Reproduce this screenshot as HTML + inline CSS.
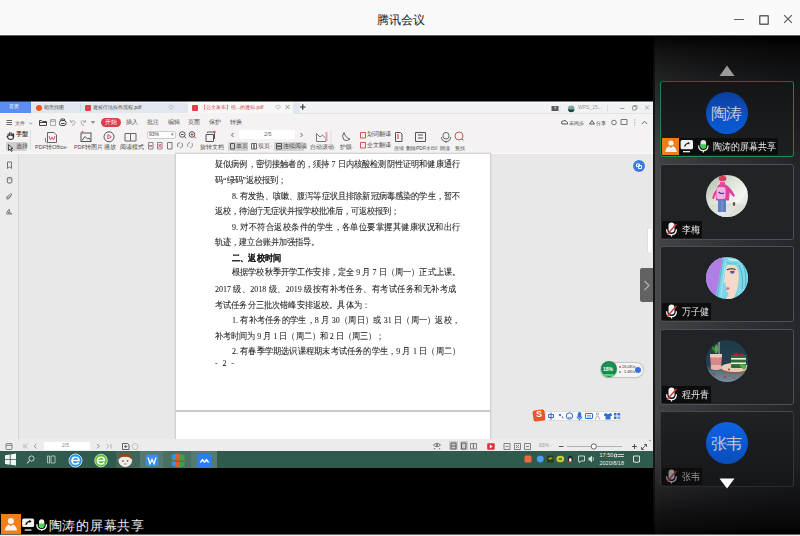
<!DOCTYPE html>
<html><head><meta charset="utf-8">
<style>
*{margin:0;padding:0;box-sizing:border-box}
html,body{width:800px;height:536px;overflow:hidden;background:#000;font-family:"Liberation Sans",sans-serif}
.a{position:absolute}
.t{position:absolute;white-space:nowrap;line-height:1}
#title{left:0;top:0;width:800px;height:35px;background:#f9f9f9;border-bottom:1px solid #fff}
#share{left:0;top:101px;width:653px;height:367px;background:#e8e8e8;overflow:hidden}
#panel{left:653px;top:35px;width:147px;height:500px;background:linear-gradient(#000 0,#0a0a0b 15px,#141516 45px,#1c1d20 90px,#252629 130px,#27282b 330px,#1e1f21 430px,#080809 490px,#000 500px)}
#pov{left:0;top:0;width:147px;height:500px;background:linear-gradient(to right,rgba(0,0,0,.4) 0,rgba(0,0,0,.4) 2px,rgba(255,255,255,.17) 2px,rgba(255,255,255,.13) 8px,rgba(255,255,255,.06) 74px,rgba(255,255,255,0) 147px);-webkit-mask-image:linear-gradient(rgba(0,0,0,.15) 0,#000 120px,#000 380px,rgba(0,0,0,.2) 480px)}
.card{position:absolute;left:7px;width:134px;height:76px;border:1px solid #4d4f54;border-radius:3px;background:#222326}
.av{position:absolute;left:45px;top:10px;width:42px;height:42px;border-radius:50%;overflow:hidden}
.tag{position:absolute;left:1px;top:56px;height:17px;background:#0d0d0e}
.s5{font-size:5.5px}
.s4{font-size:5px}
.dl{position:absolute;transform:scaleY(1.1);white-space:nowrap;font-size:8px;-webkit-text-stroke:0.06px #1c1c1c;line-height:10px;height:10px;color:#1c1c1c;font-family:"Liberation Serif",serif}
.nm{position:absolute;top:3.8px;font-size:10px;line-height:10px;color:#e6e6e6;white-space:nowrap;transform:scaleX(.9);transform-origin:0 0}
</style></head><body>
<div id="title" class="a">
  <div class="t" style="left:377px;top:14px;font-size:12px;color:#1a1a1a">腾讯会议</div>
  <div class="a" style="left:733.5px;top:18.5px;width:10.5px;height:1.5px;background:#626262"></div>
  <svg class="a" style="left:758px;top:14px" width="12" height="12"><rect x="1.75" y="1.75" width="8.5" height="8.5" fill="none" stroke="#626262" stroke-width="1.4" rx=".5"/></svg>
  <svg class="a" style="left:783px;top:14px" width="10" height="10"><path d="M1.2 1.2L8.8 8.8M8.8 1.2L1.2 8.8" stroke="#5a5a5a" stroke-width="1.2"/></svg>
</div>

<div id="share" class="a">
  <!-- tab bar y0-12 -->
  <div class="a" style="left:0;top:0;width:653px;height:12px;background:#e2e6ee"></div>
  <div class="a" style="left:300px;top:0;width:353px;height:12px;background:#f1f2f5"></div>
  <div class="a" style="left:0;top:0;width:31px;height:12px;background:#5a8ef0"></div>
  <div class="t s4" style="left:9px;top:3px;color:#fff">首页</div>
  <div class="a" style="left:80px;top:2px;width:1px;height:8px;background:#cfd4dc"></div>
  <div class="a" style="left:36px;top:4px;width:6px;height:6px;border-radius:50%;background:#f0551e"></div>
  <div class="t s4" style="left:44px;top:3.5px;color:#444">稻壳找图</div>
  <div class="a" style="left:85px;top:4px;width:6px;height:6px;border-radius:1px;background:#e0404a"></div>
  <div class="t s4" style="left:93px;top:3.5px;color:#444">返校疗法操作流程.pdf</div>
  <div class="a" style="left:188px;top:0;width:105px;height:13px;background:#f7f7f7"></div>
  <div class="a" style="left:192px;top:4px;width:6px;height:6px;border-radius:1px;background:#e0404a"></div>
  <div class="t s4" style="left:201px;top:3.5px;color:#d5424c">【公文发布】统...的通知.pdf</div>
  <svg class="a" style="left:0;top:0" width="653" height="12"><g fill="none" stroke-width=".9">
    <path d="M168.5 5.5Q170 3.5 171 5Q172 3.5 173.5 5.5L171 8.5Z" stroke="#bbb"/>
    <path d="M275.5 5.5Q277 3.5 278 5Q279 3.5 280.5 5.5L278 8.5Z" stroke="#bbb"/>
    <path d="M285.5 4L289.5 8M289.5 4L285.5 8" stroke="#888"/>
    <path d="M300 6H305.5M302.75 3.25V8.75" stroke="#333" stroke-width="1.2"/>
    <rect x="551.5" y="5" width="7" height="5" fill="#5a5a5a" stroke="none"/><path d="M554 6.3Q555 5.7 556 6.3Q556.2 7.3 555 7.6V8.3" stroke="#eee" stroke-width=".6"/>
    <path d="M560 4.5V10.5M607.5 4.5V10.5" stroke="#ddd"/>
    <circle cx="571.2" cy="7.7" r="3.3" fill="#7aa898" stroke="none"/><path d="M568 8.5H574.5A3.3 3.3 0 0 1 568 8.5Z" fill="#2a3a4a" stroke="none"/>
    <path d="M620 7.5H624.5" stroke="#999"/>
    <path d="M632.5 5.5H636V9H632.5ZM633.5 5.5V4.5H637V8H636" stroke="#999"/>
    <path d="M645.2 4.7L649 8.5M649 4.7L645.2 8.5" stroke="#999"/>
  </g></svg>
  <div class="t s4" style="left:578px;top:4px;color:#999">WPS_15...</div>

  <!-- toolbar y12-52 -->
  <div class="a" style="left:0;top:12px;width:653px;height:41px;background:#f4f2f3;border-bottom:1px solid #f8f8f8"></div>
  <div class="a" style="left:293px;top:12px;width:360px;height:1px;background:#e3e4e8"></div>
  <div class="a" style="left:6px;top:40.5px;width:21px;height:9.5px;border-radius:2px;background:#cfcfcf"></div>
  <div class="a" style="left:228px;top:40.5px;width:20px;height:9.5px;border-radius:1px;background:#d2d2d2"></div>
  <div class="a" style="left:274px;top:40.5px;width:30px;height:9.5px;border-radius:1px;background:#d2d2d2"></div>
  <div class="a" style="left:147px;top:29.5px;width:28.5px;height:8px;border:1px solid #cdcdcd;border-radius:2px;background:#fdfdfd"></div>
  <div class="a" style="left:239px;top:29px;width:56px;height:9px;background:#fff"></div>
  <svg class="a" style="left:0;top:12px" width="653" height="40">
    <g fill="none" stroke-width="1">
      <path d="M6.5 7.5H12M6.5 9.5H12M6.5 11.5H12" stroke="#666"/>
      <path d="M29 9.5L30.7 11.2L32.4 9.5" stroke="#999"/>
      <path d="M39.5 7.5V12.5H46.5V8.5H42.5L41.5 7.5Z" stroke="#444"/><path d="M39.5 9.5H46.5" stroke="#444"/>
      <path d="M50.5 6.5H55.5V12.5H50.5Z" stroke="#aaa"/><path d="M51.5 6.5V8.5H54.5V6.5" stroke="#aaa"/>
      <rect x="59.5" y="7.5" width="6.5" height="5" rx="2" stroke="#444"/><path d="M61 7.5V6H64.5V7.5M61 10.5H64.5" stroke="#444"/>
      <path d="M71 8.5Q74.5 6.5 75 9.5Q75 12 72 12.5" stroke="#aaa"/><path d="M70.5 7V9.2H72.7" stroke="#aaa"/>
      <path d="M85 8.5Q81.5 6.5 81 9.5Q81 12 84 12.5" stroke="#aaa"/><path d="M85.5 7V9.2H83.3" stroke="#aaa"/>
      <path d="M91.5 8.5L93 10.5L94.5 8.5Z" stroke="#888"/>
      <!-- row2 left -->
      <path d="M8.2 23.5V20.5M9.7 23V19.3M11.2 23V19.6M12.6 23.5V21Q13.5 20.5 13.6 22V24Q13.3 26.5 10.8 26.5Q8.5 26.5 7.6 24.5L7 22.8" stroke="#333" stroke-width="1.1"/>
      <path d="M8.5 31.5V37.5L10 36L11.3 38.5L12.3 38L11 35.5H13Z" stroke="#444" stroke-width=".9"/>
      <path d="M30.5 17V37" stroke="#dedede"/>
      <!-- PDF to office -->
      <path d="M47.5 19.5H54L56.5 22V29.5H47.5Z" stroke="#666"/><path d="M49 23L50.5 27L52 24L53.5 27L55 23" stroke="#e05070"/>
      <path d="M45.5 25V28.5L48 30" stroke="#e05070"/>
      <!-- pdf to image -->
      <rect x="81" y="20" width="10" height="8.5" stroke="#555"/><path d="M82 27.5L85 23.5L87.5 26L89 25L90.5 27.5" stroke="#555"/><circle cx="82.5" cy="19" r="1" fill="#e05070" stroke="none"/>
      <!-- play -->
      <circle cx="109" cy="23.8" r="5" stroke="#555"/><path d="M107.8 21.5V26L111.3 23.8Z" stroke="#e05070"/>
      <!-- reading mode -->
      <path d="M125 20.5H130.5V28H125ZM130.5 20.5H136V28H130.5Z" stroke="#666"/>
      <!-- zoom -->
      <circle cx="182.3" cy="21.5" r="2.8" stroke="#555"/><path d="M184.3 23.5L186 25.2M181 21.5H183.6" stroke="#555"/>
      <circle cx="192" cy="21.5" r="2.8" stroke="#555"/><path d="M194 23.5L195.7 25.2M190.7 21.5H193.3M192 20.2V22.8" stroke="#c33"/>
      <path d="M148.5 29.5H153V36H148.5Z" stroke="#888"/><path d="M149 33H152.5" stroke="#e05070" stroke-width="1.5"/>
      <path d="M157.5 29.5H162V36H157.5Z" stroke="#888"/><path d="M158.5 31L161 34.5M161 31L158.5 34.5" stroke="#e05070"/>
      <path d="M167.5 29.5H172V36H167.5Z" stroke="#777"/>
      <path d="M178 34Q176.5 30 180 29.5M182 30Q183.5 34 180 35" stroke="#777"/>
      <path d="M188 34Q186.5 30 190 29.5M192 30Q193.5 34 190 35" stroke="#999"/>
      <!-- rotate -->
      <path d="M206 21.5H213.5V28.5H206Z" stroke="#555"/><path d="M207.5 20V19H214.5V26" stroke="#555"/><circle cx="214.5" cy="19" r="1.2" fill="#e05070" stroke="none"/>
      <!-- nav -->
      <path d="M233.5 20L231.5 22L233.5 24" stroke="#666"/>
      <path d="M300.5 20L302.5 22L300.5 24" stroke="#666"/>
      <path d="M230.5 30.5H234.5V36H230.5Z" stroke="#555"/>
      <path d="M251.5 30.5H254V36H251.5ZM254 30.5H256.5V36H254Z" stroke="#666"/>
      <path d="M276.5 30.5H281.5V33H276.5ZM276.5 33.5H281.5V36H276.5Z" stroke="#555"/>
      <!-- auto scroll -->
      <path d="M316.5 20.5L320 24L322.5 22L326 25.5V28.5H316.5Z" stroke="#777"/><rect x="325.5" y="19" width="2" height="9" fill="#e8a0a8" stroke="none"/>
      <path d="M331 17V37" stroke="#dedede"/>
      <!-- moon -->
      <path d="M344 19.5Q341 23 344 27Q347.5 28.5 350 26Q345.5 25 344 19.5Z" stroke="#666"/>
      <path d="M360.5 19.5H365.5V25H360.5Z" stroke="#c55"/><path d="M360.5 29.5H365.5V35H360.5Z" stroke="#c55"/>
      <path d="M395.5 19.5H400.5L402 21V28.5H395.5Z" stroke="#555"/><path d="M398 21V26" stroke="#c33"/>
      <path d="M415.5 19.5H425.5V28.5H415.5Z" stroke="#555"/><path d="M418 22H423M418 25H423" stroke="#555"/>
      <rect x="443" y="19.5" width="6" height="6.5" rx="3" stroke="#666"/><path d="M441.5 24Q441.5 28.5 446 28.5Q450.5 28.5 450.5 24M446 28.5V30" stroke="#666"/>
      <circle cx="459" cy="23" r="4" stroke="#c55"/><path d="M461.8 25.8L463.5 27.5" stroke="#c55"/>
      <!-- right of row1 -->
      <path d="M561.5 10Q561.5 7.5 563.5 8Q565 6.5 566.5 8.5Q568 9 567.5 11H562Z" stroke="#555"/>
      <path d="M589.5 11L592 7.5L594.5 11Z" stroke="#555"/>
      <circle cx="614" cy="9.5" r="2.3" stroke="#777"/>
      <path d="M621 6.5H627V11.5H621Z" stroke="#777"/>
      <path d="M634.7 6.5V7.3M634.7 9V9.8M634.7 11.5V12.3" stroke="#777"/>
      <path d="M641.8 11L644.5 8.3L647.2 11" stroke="#666"/>
    </g>
  </svg>
  <div class="t s4" style="left:15px;top:19.5px;color:#4a4a4a">文件</div>
  <div class="a" style="left:101px;top:17px;width:20px;height:9px;border-radius:5px;background:#d9404c"></div>
  <div class="t s5" style="left:105px;top:19px;color:#fff">开始</div>
  <div class="t s5" style="left:126px;top:19px;color:#4a4a4a">插入</div>
  <div class="t s5" style="left:147px;top:19px;color:#4a4a4a">批注</div>
  <div class="t s5" style="left:168px;top:19px;color:#4a4a4a">编辑</div>
  <div class="t s5" style="left:188px;top:19px;color:#4a4a4a">页面</div>
  <div class="t s5" style="left:209px;top:19px;color:#4a4a4a">保护</div>
  <div class="t s5" style="left:230px;top:19px;color:#4a4a4a">转换</div>
  <div class="t s4" style="left:569px;top:19.5px;color:#444">未同步</div>
  <div class="t s4" style="left:595.5px;top:19.5px;color:#444">分享</div>

  <!-- row 2 -->
  <div class="t s5" style="left:15.5px;top:31px;color:#333;font-weight:bold">手型</div>
  <div class="t s5" style="left:15.5px;top:42.5px;color:#4a4a4a">选择</div>
  <div class="t s5" style="left:35px;top:44px;color:#4a4a4a">PDF转Office·</div>
  <div class="t s5" style="left:74px;top:44px;color:#4a4a4a">PDF转图片</div>
  <div class="t s5" style="left:104px;top:44px;color:#4a4a4a">播放</div>
  <div class="t s5" style="left:120px;top:44px;color:#4a4a4a">阅读模式</div>
  <div class="t" style="left:149px;top:31px;font-size:5px;color:#444">93%</div>
  <div class="t" style="left:171px;top:31px;font-size:5px;color:#777">▾</div>
  <div class="t s5" style="left:200px;top:44px;color:#4a4a4a">旋转文档</div>
  <div class="t s5" style="left:264px;top:31px;color:#666">2/5</div>
  <div class="t s5" style="left:236px;top:42.5px;color:#4a4a4a">单页</div>
  <div class="t s5" style="left:258px;top:42.5px;color:#4a4a4a">双页·</div>
  <div class="t s5" style="left:283px;top:42.5px;color:#4a4a4a">连续阅读</div>
  <div class="t s5" style="left:310px;top:44px;color:#4a4a4a">自动滚动·</div>
  <div class="t s5" style="left:340px;top:44px;color:#4a4a4a">护眼·</div>
  <div class="t s5" style="left:367px;top:31px;color:#4a4a4a">划词翻译</div>
  <div class="t s5" style="left:367px;top:42px;color:#4a4a4a">全文翻译</div>
  <div class="t" style="left:394px;top:44.5px;font-size:5px;color:#4a4a4a">压缩</div>
  <div class="t" style="left:406px;top:44.5px;font-size:5px;color:#4a4a4a">删除PDF水印/</div>
  <div class="t" style="left:440px;top:44.5px;font-size:5px;color:#4a4a4a">朗读</div>
  <div class="t" style="left:455px;top:44.5px;font-size:5px;color:#4a4a4a">查找</div>

  <!-- content y52-338 -->
  <div class="a" style="left:0;top:53px;width:19px;height:285px;background:#ececec;border-right:1px solid #d6d6d6"></div>
  <div class="a" style="left:19px;top:53px;width:634px;height:285px;background:#e8e8e8"></div>
  <svg class="a" style="left:0;top:53px" width="18" height="70"><g fill="none" stroke-width=".9">
    <path d="M7.5 8V14.5L9.5 12.8L11.5 14.5V8Z" stroke="#666"/>
    <rect x="7.3" y="23.5" width="4.5" height="5.5" rx="1.2" stroke="#555"/><path d="M8.5 25H10.8" stroke="#888"/>
    <path d="M10.8 39Q12 40.5 10.5 42.5L8.5 44.5Q6.5 45.5 6.8 43.5L9.5 40.5" stroke="#777" stroke-width="1.1"/>
    <path d="M6.5 59.5Q8 55 9.5 55.5Q10.5 57 8 59Q10 58 11.5 59.5M6.5 60H12" stroke="#666"/>
  </g></svg>
  <div class="a" style="left:176px;top:53px;width:314px;height:256px;background:#fff;box-shadow:0 0 1.5px 1px #c8c8c8"></div>
  <div class="a" style="left:176px;top:311px;width:314px;height:40px;background:#fff;box-shadow:0 0 1.5px 1px #c8c8c8"></div>
  <div class="a" style="left:176px;top:309px;width:314px;height:2px;background:#c9c9c9"></div>
  <div id="doc">
  <div class="dl" style="left:215px;top:59.2px;width:245px;text-align:justify;text-align-last:justify">疑似病例，密切接触者的，须持 7 日内核酸检测阴性证明和健康通行</div>
  <div class="dl" style="left:215px;top:74.7px">码“绿码”返校报到；</div>
  <div class="dl" style="left:232px;top:91.2px;width:228px;text-align:justify;text-align-last:justify">8. 有发热、咳嗽、腹泻等症状且排除新冠病毒感染的学生，暂不</div>
  <div class="dl" style="left:215px;top:106.2px">返校，待治疗无症状并报学校批准后，可返校报到；</div>
  <div class="dl" style="left:232px;top:121.7px;width:228px;text-align:justify;text-align-last:justify">9. 对不符合返校条件的学生，各单位要掌握其健康状况和出行</div>
  <div class="dl" style="left:215px;top:137.2px">轨迹，建立台账并加强指导。</div>
  <div class="dl" style="left:232px;top:153.2px;width:49px;text-align:justify;text-align-last:justify;font-weight:bold;font-family:"Liberation Sans",sans-serif;color:#2e2e2e;-webkit-text-stroke:0">二、返校时间</div>
  <div class="dl" style="left:232px;top:167.2px;width:228px;text-align:justify;text-align-last:justify">根据学校秋季开学工作安排，定全 9 月 7 日（周一）正式上课。</div>
  <div class="dl" style="left:215px;top:184px;width:241px;text-align:justify;text-align-last:justify">2017 级、2018 级、2019 级按有补考任务、有考试任务和无补考成</div>
  <div class="dl" style="left:215px;top:200.2px;width:155px;text-align:justify;text-align-last:justify">考试任务分三批次错峰安排返校。具体为：</div>
  <div class="dl" style="left:232px;top:214.7px;width:228px;text-align:justify;text-align-last:justify">1. 有补考任务的学生，8 月 30（周日）或 31 日（周一）返校，</div>
  <div class="dl" style="left:215px;top:230.5px;width:169px;text-align:justify;text-align-last:justify">补考时间为 9 月 1 日（周二）和 2 日（周三）；</div>
  <div class="dl" style="left:232px;top:246.2px;width:228px;text-align:justify;text-align-last:justify">2. 有春季学期选识课程期末考试任务的学生，9 月 1 日（周二）</div>
  <div class="dl" style="left:215px;top:258.3px;width:19px;text-align:justify;text-align-last:justify">- 2 -</div>
  </div>
  <div class="a" style="left:632.5px;top:58.5px;width:12px;height:12px;border-radius:50%;background:#3b7be6;box-shadow:0 0 1px #fff"></div>
  <svg class="a" style="left:632.5px;top:58.5px" width="12" height="12"><path d="M3.5 4H6.5V6.5H3.5ZM5.5 5.5H8.5V8.5H5.5Z" fill="none" stroke="#fff" stroke-width="1"/></svg>
  <div class="a" style="left:647px;top:126px;width:6px;height:27px;border-radius:3px;background:#fff;border:1px solid #ddd"></div>
  <div class="a" style="left:601px;top:261.5px;width:42px;height:14px;border-radius:7px;background:#f4f4f4;box-shadow:0 0 1px 1px #c4c4c4"></div>
  <div class="a" style="left:600.5px;top:260px;width:16px;height:16px;border-radius:50%;background:radial-gradient(circle at 50% 40%,#1d9a58,#117a42);box-shadow:0 1px 1px rgba(0,0,0,.2)"></div>
  <div class="a" style="left:603px;top:273px;width:11px;height:2px;background:#3ee06a;border-radius:1px"></div>
  <div class="t" style="left:603px;top:265.5px;font-size:5px;color:#fff;font-weight:bold">18%</div>
  <div class="a" style="left:618.5px;top:265px;width:2px;height:2px;border-radius:50%;background:#e05070"></div>
  <div class="a" style="left:618.5px;top:270px;width:2px;height:2px;border-radius:50%;background:#50b060"></div>
  <div class="t" style="left:622px;top:263.5px;font-size:4px;color:#333">26.0K/s</div>
  <div class="t" style="left:624px;top:268.5px;font-size:4px;color:#333">1.4K/s</div>
  <div class="a" style="left:635px;top:265.5px;width:6px;height:6px;border-radius:50%;background:#3b6fe0"></div>
  <div class="a" style="left:533px;top:309px;width:12px;height:11px;background:#e8552a;border-radius:2px;transform:rotate(-8deg)"></div>
  <div class="t" style="left:536px;top:309px;font-size:9px;color:#fff;font-weight:bold">S</div>
  <div class="a" style="left:545px;top:310px;width:76px;height:10px;background:#fafafa;border:1px solid #ddd"></div>
  <svg class="a" style="left:545px;top:310px" width="76" height="10"><g fill="none" stroke="#2f6fd0" stroke-width="1">
<path d="M3.5 3.5H8.5V6.5H3.5ZM6 1.5V9"/>
<circle cx="15" cy="4" r=".8" fill="#2f6fd0"/><path d="M17.5 5.5L18 7.5" />
<circle cx="24.5" cy="5" r="3.2"/><path d="M23 4.5V4.6M26 4.5V4.6M23 6.2Q24.5 7.2 26 6.2" stroke-width=".8"/>
<rect x="33.2" y="1.5" width="2.6" height="5" rx="1.3" fill="#2f6fd0"/><path d="M32 5.5Q32 8 34.5 8Q37 8 37 5.5M34.5 8V9.5"/>
<rect x="40.5" y="2.5" width="7" height="5" rx=".5"/><path d="M42 4.5H46M42 6H46" stroke-width=".6"/>
<circle cx="52.5" cy="3" r="1.2" stroke="#aab"/><path d="M50.5 8.5Q50.5 5.5 52.5 5.5Q54.5 5.5 54.5 8.5" stroke="#aab"/>
<path d="M59.5 2.5L61 2L62 3H64L65 2L66.5 2.5L67 5H65.5V8.5H60.5V5H59Z" fill="#2f6fd0" stroke="none"/>
<rect x="69" y="2" width="2.5" height="2.5" fill="#2f6fd0" stroke="none"/><rect x="72.5" y="2" width="2.5" height="2.5" fill="#2f6fd0" stroke="none"/><rect x="69" y="5.5" width="2.5" height="2.5" fill="#2f6fd0" stroke="none"/><rect x="72.5" y="5.5" width="2.5" height="2.5" fill="#6a9ae0" stroke="none"/>
</g></svg>

  <!-- status bar y338-350 -->
  <div class="a" style="left:0;top:338px;width:653px;height:12px;background:#ececec"></div>
  <div class="a" style="left:44px;top:340.5px;width:46px;height:8px;background:#fff"></div>
  <div class="a" style="left:449px;top:340px;width:9px;height:8.5px;background:#cbcbcb"></div>
  <div class="a" style="left:459.5px;top:340px;width:8.5px;height:8.5px;background:#cbcbcb"></div>
  <svg class="a" style="left:0;top:338px" width="653" height="12"><g fill="none" stroke-width=".9">
    <rect x="6" y="4.5" width="6" height="6" rx="1" stroke="#777"/><path d="M6 6.3H12" stroke="#777"/>
    <path d="M24 5V9.5M27.5 5L25.2 7.2L27.5 9.5" stroke="#aaa"/>
    <path d="M36.5 5L34.2 7.2L36.5 9.5" stroke="#888"/>
    <path d="M97 5L99.3 7.2L97 9.5" stroke="#888"/>
    <path d="M106.5 5L108.8 7.2L106.5 9.5M111 5V9.5" stroke="#aaa"/>
    <path d="M122.5 4.5H127.5L129 6V10.5H122.5Z" stroke="#555"/><path d="M125.7 6V9M124.2 7.5H127.2" stroke="#555"/>
    <circle cx="135" cy="7.5" r="3" stroke="#bbb"/>
    <path d="M433.5 6Q437 2.5 440.5 6Q437 9.5 433.5 6ZM434 9L435 10.5M440 9L439 10.5" stroke="#666"/><circle cx="437" cy="6" r="1" fill="#666" stroke="none"/>
    <path d="M451 4H456V10H451Z" stroke="#555"/><path d="M451 7H456" stroke="#555"/>
    <path d="M461.5 4H466V10H461.5Z" stroke="#555"/>
    <path d="M470.5 4.5H473.3V10H470.5ZM473.7 4.5H476.5V10H473.7Z" stroke="#777"/>
    <rect x="487.2" y="4.3" width="7.5" height="6.5" rx="1" fill="#d9323c" stroke="none"/><path d="M489.8 5.6V9.4L492.6 7.5Z" fill="#fff" stroke="none"/>
    <path d="M504 4.5H510V10.5H504Z" stroke="#777"/><path d="M505.5 7.5H508.5" stroke="#777"/>
    <path d="M514.5 4.5H520.5V10.5H514.5Z" stroke="#777"/><path d="M516 6L519 9M519 6L516 9" stroke="#777"/>
    <path d="M524.5 4.5H530.5V10.5H524.5Z" stroke="#777"/><path d="M526 7.5H529" stroke="#777"/>
    <path d="M559 7.5H563.5" stroke="#444"/>
    <path d="M567 7.5H622" stroke="#aaa"/>
    <circle cx="593.8" cy="7.5" r="2.6" fill="#fff" stroke="#555"/>
    <path d="M632 7.5H637M634.5 5V10" stroke="#444"/>
    <path d="M642 10L646.5 5.5M644 5.5H646.5V8" stroke="#555"/><path d="M641.5 8V10.5H644" stroke="#555"/>
    <path d="M649 1L651 1L650 2.5Z" fill="#777" stroke="none"/>
  </g></svg>
  <div class="t" style="left:62px;top:341.5px;font-size:5px;color:#888">2/5</div>
  <div class="t" style="left:539px;top:341.5px;font-size:5px;color:#999">93% ·</div>
  <!-- taskbar y350-367 -->
  <div class="a" style="left:0;top:350px;width:653px;height:17px;background:#305a4e"></div>
  <div class="a" style="left:115.5px;top:350px;width:24px;height:17px;background:#3f665a"></div>
  <div class="a" style="left:139.5px;top:350px;width:23px;height:17px;background:#557a70"></div>
  <div class="a" style="left:163px;top:350px;width:27.5px;height:17px;background:#4a6f64"></div>
  <div class="a" style="left:191px;top:350px;width:26px;height:17px;background:#557a70"></div>
  <svg class="a" style="left:0;top:350px" width="653" height="17">
    <path d="M5 4.2L9.8 3.5V8.2H5ZM10.6 3.4L16 2.6V8.2H10.6ZM5 9H9.8V13.7L5 13ZM10.6 9H16V14.6L10.6 13.8Z" fill="#f2f5f4"/>
    <circle cx="31.5" cy="7.5" r="2.6" fill="none" stroke="#c8d4d0" stroke-width="1"/><path d="M29.6 9.5L27 12.3" stroke="#c8d4d0" stroke-width="1.1"/>
    <path d="M47.5 5H49.5V12H47.5ZM51 5H55V12H51Z" fill="none" stroke="#b8c6c2" stroke-width=".9"/>
    <circle cx="75.5" cy="9.5" r="6.5" fill="#2a95e8" stroke="#e8f4ff" stroke-width=".8"/>
    <path d="M71.8 9.5H79Q79 6.3 75.5 6.3Q72 6.3 72 9.8Q72 13 75.5 13Q77.8 13 78.8 11.5" fill="none" stroke="#fff" stroke-width="1.6"/>
    <circle cx="101" cy="9.5" r="6.3" fill="#5cc030" stroke="#d8f0c8" stroke-width=".8"/>
    <path d="M97.5 9.5H104.5Q104.5 6.3 101 6.3Q97.5 6.3 97.5 9.8Q97.5 13 101 13Q103.3 13 104.3 11.5" fill="none" stroke="#fff" stroke-width="1.6"/>
    <circle cx="125.3" cy="9.2" r="6.8" fill="#f4ece6"/>
    <path d="M118.5 8.5Q118 2 125 2Q132.5 2 132 8.5Q129 5 125 6Q121 5 118.5 8.5Z" fill="#8a4a20"/>
    <circle cx="123" cy="10" r=".8" fill="#333"/><circle cx="127.6" cy="10" r=".8" fill="#333"/><path d="M124 13H126.5" stroke="#c05050" stroke-width=".8"/>
    <rect x="145.8" y="3.5" width="12.4" height="11.5" rx="1.5" fill="#3a8ef0"/>
    <path d="M148 6.5L150 12.5L152 8.5L154 12.5L156 6.5" fill="none" stroke="#fff" stroke-width="1.3"/>
    <path d="M171.7 4L176 2.5V16L171.7 14.5Z" fill="#3a90e0"/><path d="M176 2.5L180 3V16.5L176 16Z" fill="#e05a30"/><path d="M180 3L184.5 4V15L180 16.5Z" fill="#3aa050"/>
    <path d="M171.7 9.5L184.5 10.5" stroke="#8a5a30" stroke-width="1.5"/>
    <rect x="197.2" y="3" width="14.3" height="13" rx="1" fill="#2a7ff0"/>
    <path d="M199.5 11.5L202.5 7.5L204.5 10L206.5 7.5L209.5 11.5H207.5L206.5 10L204.5 12L202.5 10L201.5 11.5Z" fill="#fff"/>
    <rect x="524.5" y="4.5" width="7" height="7" rx="1.5" fill="#f06a40"/>
    <path d="M537 6L540.2 4.5L543.5 6V10L540.2 11.7L537 10Z" fill="#4aa0f0"/>
    <rect x="547" y="4.5" width="6.5" height="7" fill="#2a3a20"/><path d="M548 8Q550 5 553 7Q550 10 548 8Z" fill="#76b900"/>
    <ellipse cx="560.3" cy="8" rx="3.8" ry="3.2" fill="#e8c830"/><ellipse cx="560.3" cy="8" rx="2" ry="1.5" fill="#3a9a40"/>
    <ellipse cx="570.3" cy="8" rx="2.3" ry="3.3" fill="#222"/><ellipse cx="570.3" cy="9" rx="1.3" ry="2" fill="#fff"/><path d="M568.5 11H572" stroke="#d03030" stroke-width="1"/>
    <path d="M578.5 5H584.5V10H581L579 11.5V10H578.5Z" fill="none" stroke="#d8e0dc" stroke-width=".9"/>
    <path d="M588.5 6.5H590L592 4.5V11.5L590 9.5H588.5Z" fill="#d8e0dc"/><path d="M593 6Q594 8 593 10" fill="none" stroke="#d8e0dc" stroke-width=".7"/>
    <path d="M614.5 3H616.5V6H614.5ZM617.5 3.5H624M617.5 5.5H624" fill="none" stroke="#e8eeea" stroke-width=".8"/>
    <path d="M633.5 5H639.5V11H637L636.5 12L636 11H633.5Z" fill="none" stroke="#e8eeea" stroke-width=".9"/>
  </svg>
  <div class="t" style="left:599.5px;top:352px;font-size:5.5px;color:#eef2f0">17:50</div>
  <div class="t" style="left:599.5px;top:359.5px;font-size:5.5px;color:#eef2f0">2020/8/18</div>
</div>

<div class="a" style="left:640px;top:268px;width:13px;height:34px;background:#626262;border-radius:2px 0 0 2px"></div>
<svg class="a" style="left:643px;top:280px" width="8" height="11"><path d="M1.5 1L6 5.5L1.5 10" stroke="#b4b4b4" stroke-width="1.1" fill="none"/></svg>
<div id="panel" class="a">
  <div id="pov" class="a"></div>
  
  <svg class="a" style="left:66px;top:30px" width="16" height="12"><path d="M8 0.5L15.5 11H0.5Z" fill="#9a9a9a"/></svg>
  <div class="card" style="top:46px;border-color:#136e3a #17864a #1a964c;background:linear-gradient(#141517,#1e1f22)">
    <div class="av" style="background:linear-gradient(#0b3e9c,#0b4fc0 50%,#0a5cd8)"><div class="t" style="left:5px;top:14px;font-size:16px;letter-spacing:-1px;color:#c4c9d2">陶涛</div></div>
    <div class="tag" style="width:116px"><svg class="a" style="left:0;top:0" width="50" height="17">
<rect x="0" y="0" width="17" height="17" fill="#f07d18"/>
<circle cx="9" cy="5" r="2.6" fill="#eef3f8"/>
<path d="M3.2 14Q4 9 7.3 8.3L9 10L10.7 8.3Q14 9 14.8 14Z" fill="#eef3f8"/>
<rect x="18.6" y="2" width="12.4" height="9.3" rx="1.5" fill="#efefef"/>
<path d="M22.5 8.5Q23.5 5.5 27 5" stroke="#222" stroke-width="1.2" fill="none"/><path d="M25.8 4L28 5L26.2 6.6Z" fill="#222"/>
<rect x="21" y="13" width="7" height="1.3" fill="#efefef"/>
<rect x="38.5" y="2" width="5.6" height="8.5" rx="2.8" fill="#e8e0e6"/>
<path d="M38.5 6.2H44.1V7.7A2.8 2.8 0 0 1 38.5 7.7Z" fill="#36d24a"/>
<path d="M36.6 7.5Q36.6 12.6 41.3 12.6Q46 12.6 46 7.5" stroke="#efefef" stroke-width="1.3" fill="none"/>
<path d="M41.3 12.6V14.5" stroke="#efefef" stroke-width="1.3"/>
</svg>
      <div class="nm" style="left:51px">陶涛的屏幕共享</div>
    </div>
  </div>
  <div class="card" style="top:129px">
    <div class="av"><svg width="42" height="42" viewBox="0 0 42 42"><defs><linearGradient id="g1" x1="0" y1="0" x2="1" y2="1"><stop offset="0" stop-color="#a9b8a2"/><stop offset=".35" stop-color="#d8e0d4"/><stop offset=".6" stop-color="#eef2ec"/><stop offset="1" stop-color="#dfe4dc"/></linearGradient></defs>
<rect width="42" height="42" fill="url(#g1)"/>
<path d="M14 42L42 10V16L22 42Z" fill="#f4f6f2" opacity=".8"/>
<path d="M0 30Q20 26 42 30V42H0Z" fill="#d4d8cf" opacity=".6"/>
<ellipse cx="16.5" cy="3.5" rx="3.8" ry="2.8" fill="#d04058"/>
<path d="M14 7H19V9.5H14Z" fill="#e050a8"/>
<path d="M10 24Q8.5 14 13 9.5Q19 8 22 11Q26 14.5 29 20.5L27.6 22L23.5 17.5L23 25.5H10Z" fill="#e23fa2"/>
<path d="M6 23.5Q7 18 10.5 14L11.5 16Q9 20 8 24Z" fill="#e23fa2"/>
<rect x="10.5" y="12" width="9" height="12" rx="2.5" fill="#f0b6dc"/>
<path d="M12.5 17Q15 19.5 18 18" stroke="#4a3aa0" stroke-width="1.3" fill="none"/>
<rect x="12" y="25" width="8" height="12" fill="#5f7fc0"/>
<path d="M16 26V37" stroke="#90a8d8" stroke-width=".8"/>
<ellipse cx="28" cy="29" rx="1.3" ry="2" fill="#6a5548"/>
<path d="M11 37H20.5V39.5H11Z" fill="#e4e8f0"/>
</svg></div>
    <div class="tag" style="width:40px"><svg class="a" style="left:0;top:0" width="18" height="17"><rect x="6.5" y="1.5" width="6" height="10" rx="3" fill="#f2f2f2"/><path d="M4.6 8.2Q4.6 13.6 9.5 13.6Q14.4 13.6 14.4 8.2" stroke="#f2f2f2" stroke-width="1.3" fill="none"/><path d="M9.5 13.6V15.5" stroke="#f2f2f2" stroke-width="1.3"/><path d="M5 13.5L14.5 3" stroke="#d8322f" stroke-width="1.3"/></svg><div class="nm" style="left:20px">李梅</div></div>
  </div>
  <div class="card" style="top:211px">
    <div class="av"><svg width="42" height="42" viewBox="0 0 42 42">
<rect width="42" height="42" fill="#7ed4e4"/>
<path d="M0 0H17Q13 20 9.5 42H0Z" fill="#b27ee6"/>
<path d="M17 2Q14 20 11 42" stroke="#5ab8d0" stroke-width="1.2" fill="none"/>
<path d="M20 3Q17 22 15 40" stroke="#a8eaf4" stroke-width="1" fill="none"/>
<path d="M20.5 9Q25 6.5 30 8.5L32.5 14Q33.5 24 31 33Q28.5 39 28 42H20Q22.5 38.5 22.5 36Q20.5 35 20.5 33.5L21.2 31.5Q19.6 30.5 20 29Q18.8 28 19.6 26.6L17.6 24.6Q19.3 20 19.2 15Z" fill="#f6dac9"/>
<path d="M21 12.8Q25 10.8 29.5 12.5" stroke="#222" stroke-width="1.1" fill="none"/>
<ellipse cx="26.3" cy="15.6" rx="2.1" ry="1.1" fill="#5060a8"/>
<path d="M24 14.6Q26.5 13.8 28.6 14.8" stroke="#222" stroke-width=".7" fill="none"/>
<path d="M20.3 30.5Q22.5 29.6 24 31Q22.7 33.6 20.8 33Z" fill="#e46a90"/>
<path d="M30 6Q36 14 34 26Q33 36 29 42H42V0H24Z" fill="#80d8e8"/>
<path d="M33 8Q38 18 36 32M36.5 6Q41 16 39.5 30" stroke="#4fb2ca" stroke-width="1" fill="none"/>
<path d="M22 2Q28 4.5 35 2" stroke="#c2f0f8" stroke-width="1.5" fill="none"/>
<path d="M19 4Q24 8.5 31 6.5" stroke="#5ab8d0" stroke-width=".8" fill="none"/>
</svg></div>
    <div class="tag" style="width:49px"><svg class="a" style="left:0;top:0" width="18" height="17"><rect x="6.5" y="1.5" width="6" height="10" rx="3" fill="#f2f2f2"/><path d="M4.6 8.2Q4.6 13.6 9.5 13.6Q14.4 13.6 14.4 8.2" stroke="#f2f2f2" stroke-width="1.3" fill="none"/><path d="M9.5 13.6V15.5" stroke="#f2f2f2" stroke-width="1.3"/><path d="M5 13.5L14.5 3" stroke="#d8322f" stroke-width="1.3"/></svg><div class="nm" style="left:20px">万子健</div></div>
  </div>
  <div class="card" style="top:294px">
    <div class="av"><svg width="42" height="42" viewBox="0 0 42 42"><defs><linearGradient id="g4" x1="0" y1="0" x2="0" y2="1"><stop offset="0" stop-color="#1f3a4a"/><stop offset=".6" stop-color="#24404f"/><stop offset=".75" stop-color="#5a7282"/><stop offset="1" stop-color="#7a8a98"/></linearGradient></defs>
<rect width="42" height="42" fill="url(#g4)"/>
<path d="M4 14H16L15 29Q10 31 5 29Z" fill="#d98a88"/>
<path d="M4 14H16V17Q10 18 4 17Z" fill="#f0c8b8"/>
<path d="M5 25H15L15 29Q10 31 5 29Z" fill="#e8c8c0" opacity=".7"/>
<path d="M9 13Q7 7 11 4Q13 9 11 13Z" fill="#5aa848"/>
<path d="M9 12Q5 9 6 6Q9 8 10 12Z" fill="#3f8a38"/>
<path d="M13 2V14" stroke="#c8d0d8" stroke-width=".9"/>
<ellipse cx="29" cy="29" rx="14" ry="5" fill="#8a6048"/>
<ellipse cx="29" cy="27.5" rx="14" ry="4.5" fill="#e6cdb8"/>
<rect x="25" y="15" width="15" height="13" rx="1" fill="#2f6a38"/>
<rect x="25" y="18" width="15" height="1.6" fill="#eef4e8"/>
<rect x="25" y="22.5" width="15" height="1.6" fill="#eef4e8"/>
<path d="M33 25Q38 23 41 27L38 30Z" fill="#58b048"/>
<ellipse cx="30" cy="14.5" rx="2.8" ry="1.7" fill="#b01c3a"/>
<ellipse cx="35.5" cy="15" rx="2.3" ry="1.5" fill="#b01c3a"/>
<circle cx="19" cy="37" r="1" fill="#c02838"/><circle cx="23" cy="29.5" r="1" fill="#c02838"/><circle cx="8" cy="34" r="1" fill="#c02838"/><circle cx="28" cy="38" r=".8" fill="#c02838"/>
</svg></div>
    <div class="tag" style="width:49px"><svg class="a" style="left:0;top:0" width="18" height="17"><rect x="6.5" y="1.5" width="6" height="10" rx="3" fill="#f2f2f2"/><path d="M4.6 8.2Q4.6 13.6 9.5 13.6Q14.4 13.6 14.4 8.2" stroke="#f2f2f2" stroke-width="1.3" fill="none"/><path d="M9.5 13.6V15.5" stroke="#f2f2f2" stroke-width="1.3"/><path d="M5 13.5L14.5 3" stroke="#d8322f" stroke-width="1.3"/></svg><div class="nm" style="left:20px">程丹青</div></div>
  </div>
  <div class="card" style="top:376px;background:linear-gradient(#202124,#161719);border-color:#46484c #36373b #2a2b2e">
    <div class="av" style="background:linear-gradient(#0f62e2,#0b58d2 50%,#0a4cb8)"><div class="t" style="left:5px;top:14px;font-size:16px;letter-spacing:-1px;color:#c4c9d2">张韦</div></div>
    <div class="tag" style="width:40px"><svg class="a" style="left:0;top:0" width="18" height="17"><rect x="6.5" y="1.5" width="6" height="10" rx="3" fill="#8a8a8a"/><path d="M4.6 8.2Q4.6 13.6 9.5 13.6Q14.4 13.6 14.4 8.2" stroke="#8a8a8a" stroke-width="1.3" fill="none"/><path d="M9.5 13.6V15.5" stroke="#8a8a8a" stroke-width="1.3"/><path d="M5 13.5L14.5 3" stroke="#8a2a28" stroke-width="1.3"/></svg><div class="nm" style="left:20px;color:#9a9a9a">张韦</div></div>
  </div>
  <svg class="a" style="left:66px;top:443px" width="16" height="11"><path d="M0.5 0.5H15.5L8 10.5Z" fill="#fff"/></svg>
</div>

<svg class="a" style="left:1px;top:514px" width="50" height="20" viewBox="0 0 50 20">
<rect x="0" y="0" width="20" height="20" fill="#f57f17"/>
<circle cx="9.9" cy="7.1" r="3" fill="#f4f4f4"/>
<path d="M3.8 16.5Q4.6 11.4 8.2 10.6L9.9 12.4L11.6 10.6Q15.2 11.4 16 16.5Z" fill="#f4f4f4"/>
<rect x="21.1" y="4.5" width="12" height="8.6" rx="1.6" fill="#f2f2f2"/>
<path d="M24.8 10.8Q25.8 7.6 29.4 7.2" stroke="#111" stroke-width="1.3" fill="none"/><path d="M28.2 6.1L30.6 7.2L28.6 8.9Z" fill="#111"/>
<rect x="23.8" y="15.4" width="6.7" height="1.3" fill="#f2f2f2"/>
<rect x="38" y="5.3" width="5.3" height="8.5" rx="2.65" fill="#f0f0f0"/>
<path d="M38 9.4H43.3V11.1A2.65 2.65 0 0 1 38 11.1Z" fill="#3ee04e"/>
<path d="M35.8 10.2Q35.8 15.6 40.65 15.6Q45.5 15.6 45.5 10.2" stroke="#f0f0f0" stroke-width="1.4" fill="none"/>
<path d="M40.65 15.6V16.8" stroke="#f0f0f0" stroke-width="1.4"/>
</svg>
<div class="t" style="left:48.5px;top:519px;font-size:13px;letter-spacing:0.75px;color:#ececec">陶涛的屏幕共享</div>
<div class="a" style="left:0;top:535px;width:800px;height:1px;background:#f0f0f0"></div>
<div class="a" style="left:0;top:35px;width:800px;height:1px;background:#5e5e5e"></div>
<div class="a" style="left:0;top:534px;width:800px;height:1px;background:rgba(255,255,255,.4)"></div>
<div class="a" style="left:0;top:101px;width:653px;height:1px;background:rgba(0,0,0,.5)"></div>
<div class="a" style="left:31px;top:102px;width:622px;height:1px;background:rgba(255,255,255,.7)"></div>
</body></html>
